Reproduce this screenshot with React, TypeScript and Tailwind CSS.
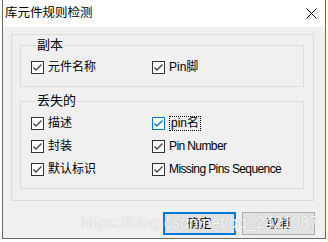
import React from "react";

type Item = { label: string; focus?: boolean };

function CheckBox({ focus }: { focus?: boolean }) {
  const c = focus ? "#0078d7" : "#333333";
  return (
    <svg width="13" height="13" viewBox="0 0 13 13" className="shrink-0">
      <rect x="0.5" y="0.5" width="12" height="12" fill="#ffffff" stroke={c} />
      <polyline points="2.5,6.5 5,9 10.5,3.5" fill="none" stroke={focus ? c : "#444444"} strokeWidth="1.4" />
    </svg>
  );
}

function Check({ label, focus }: Item) {
  const latin = /^[\x20-\x7e]+$/.test(label);
  return (
    <label className="flex h-[16px] items-center gap-[4px] whitespace-nowrap">
      <CheckBox focus={focus} />
      <span
        className={
          (focus ? "border border-dotted border-black px-px leading-[13px]" : "leading-[16px]") +
          (latin ? " tracking-[-0.6px]" : "")
        }
      >
        {label}
      </span>
    </label>
  );
}

function Group({ title, rows }: { title: string; rows: Item[][] }) {
  return (
    <fieldset className="border border-[#dcdcdc] pl-[10px] pb-[11px]">
      <legend className="ml-[5px] px-px text-[13px] leading-[14px]">{title}</legend>
      <div className="mt-[7px] flex flex-col gap-[7px]">
        {rows.map((r, i) => (
          <div key={i} className="grid grid-cols-[121px_1fr]">
            {r.map((it) => (
              <Check key={it.label} {...it} />
            ))}
          </div>
        ))}
      </div>
    </fieldset>
  );
}

export default function App() {
  return (
    <div
      className="relative flex h-[242px] w-[328px] overflow-hidden bg-white text-[12px] text-black"
      style={{ fontFamily: '"Liberation Sans", "Noto Sans CJK SC", sans-serif' }}
    >
      <div className="ml-[2px] flex h-[239px] w-[324px] flex-col border-x border-b border-[#6b6b6b] bg-[#f0f0f0]">
        <div className="flex h-[27px] items-center justify-between bg-white pl-[2px] pr-[8px]">
          <span className="text-[12.5px]">库元件规则检测</span>
          <svg width="11" height="11" viewBox="0 0 11 11">
            <path d="M0.5 0.5 L10.5 10.5 M10.5 0.5 L0.5 10.5" stroke="#111" strokeWidth="1" />
          </svg>
        </div>

        <div className="ml-[8px] mt-[7px] flex w-[303px] flex-col gap-[7px] border border-[#dcdcdc] pb-[11px] pl-[8px] pr-[9px] pt-[3px]">
          <Group title="副本" rows={[[{ label: "元件名称" }, { label: "Pin脚" }]]} />
          <Group
            title="丢失的"
            rows={[
              [{ label: "描述" }, { label: "pin名", focus: true }],
              [{ label: "封装" }, { label: "Pin Number" }],
              [{ label: "默认标识" }, { label: "Missing Pins Sequence" }],
            ]}
          />
        </div>

        <div className="ml-[160px] mt-[11px] flex gap-[6px]">
          <button className="flex h-[23px] w-[73px] items-center justify-center border-2 border-[#0078d7] bg-[#e1e1e1]">
            确定
          </button>
          <button className="flex h-[23px] w-[73px] items-center justify-center border border-[#adadad] bg-[#e1e1e1]">
            取消
          </button>
        </div>
      </div>
      <div className="h-full w-[2px] bg-[#fffde0]" />

      <div className="pointer-events-none absolute left-0 top-[211px] flex w-[318px] justify-end text-[16px] text-white/90 [text-shadow:0_0_1px_#a0a0a0]">
        https://blog.csdn.net/qq_2421087
      </div>
    </div>
  );
}
